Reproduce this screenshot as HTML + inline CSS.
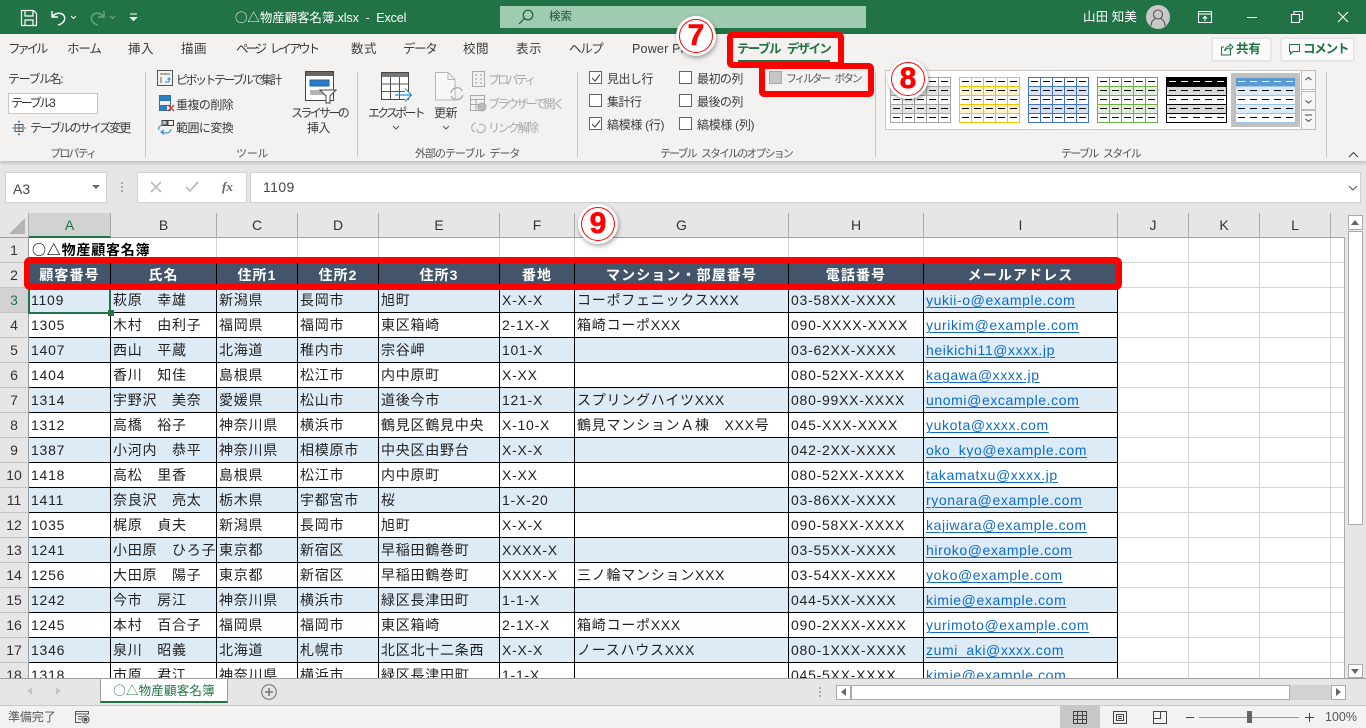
<!DOCTYPE html>
<html lang="ja"><head><meta charset="utf-8"><title>Excel</title>
<style>
*{box-sizing:border-box}
html,body{margin:0;padding:0;width:1366px;height:728px;overflow:hidden;background:#e6e6e6}
body{position:relative;font-family:"Liberation Sans","Noto Sans CJK JP",sans-serif;color:#333}
.a{position:absolute;white-space:nowrap}
.c{font-family:"Noto Sans CJK JP",sans-serif}
.r{position:absolute;font-size:12px;letter-spacing:-.55px;line-height:16px;white-space:nowrap;color:#3b3b3b}
.tab{position:absolute;top:41px;font-size:12.5px;line-height:16px;letter-spacing:.5px;color:#3c3c3c;white-space:nowrap}
.g{color:#a8a8a8}
.sep{position:absolute;top:72px;height:85px;width:1px;background:#c8c6c4}
.cb{position:absolute;width:13px;height:13px;border:1px solid #666;background:#fff}
.lbl{position:absolute;font-size:11px;letter-spacing:-.3px;color:#555;white-space:nowrap;top:146px;line-height:16px}
svg{position:absolute;overflow:visible}
table{border-collapse:separate;border-spacing:0;table-layout:fixed;position:absolute;left:0;top:0}
td,th{height:25px;padding:0 0 0 2px;font-weight:normal;font-size:14px;letter-spacing:.75px;white-space:nowrap;overflow:hidden;border-right:1px solid #000;border-bottom:1px solid #000;color:#222;line-height:24px;text-align:left}
td.h{background:#e6e6e6;border-right:1px solid #9e9e9e;border-bottom:1px solid #c4c4c4;text-align:center;padding:0;font-size:14px;letter-spacing:0;color:#333}
td.e{border-right:1px solid #d4d4d4;border-bottom:1px solid #d4d4d4;background:#fff}
tr.b td:not(.h):not(.e){background:#ddebf7}
tr.t td:not(.h):not(.e){background:#44546a;color:#fff;font-weight:bold;text-align:center;padding:0;letter-spacing:1.1px}
td u{color:#0b6cc9;text-decoration-thickness:1px;text-underline-offset:2px;letter-spacing:.6px}
.ch{position:absolute;top:213px;height:25px;background:#e6e6e6;border-right:1px solid #ababab;border-bottom:1px solid #9e9e9e;text-align:center;font-size:14px;line-height:24px;color:#333}
.btn{position:absolute;background:#fff;border:1px solid #ababab}
.red{position:absolute;border:6px solid #f00;border-radius:5px}
.num{position:absolute;width:40px;height:40px;border-radius:50%;background:#fff;box-shadow:1px 2px 5px rgba(0,0,0,.35)}
.num i{position:absolute;left:3px;top:3px;width:34px;height:34px;border-radius:50%;border:1.5px solid #f00}
.num b{position:absolute;left:0;top:0;width:40px;text-align:center;line-height:40px;font-size:30px;color:#f00;font-family:"Liberation Sans",sans-serif;font-style:normal;-webkit-text-stroke:.6px #f00}
</style></head><body>

<!-- title bar -->
<div class="a" style="left:0;top:0;width:1366px;height:34px;background:#217346"></div>
<svg style="left:20px;top:9px" width="18" height="18" fill="none" stroke="#fff" stroke-width="1.2"><path d="M1.5 1.5H13.5L16.5 4.5V16.5H1.5Z"/><path d="M5 1.5V7H13V1.5"/><path d="M5 16.5V11H13V16.5"/></svg>
<svg style="left:50px;top:9px" width="30" height="18" fill="none" stroke="#fff" stroke-width="1.4"><path d="M2 2V8H8"/><path d="M2.5 8C5 3 13 3 14.5 8 15.500 12 12 15 8 16"/><path d="M21 7l2.500 2.500L26 7" stroke-width="1"/></svg>
<svg style="left:88px;top:9px" width="30" height="18" fill="none" stroke="#6ba584" stroke-width="1.4"><path d="M16 2V8H10"/><path d="M15.500 8C13 3 5 3 3.500 8 2.500 12 6 15 10 16"/><path d="M22 7l2.500 2.500L27 7" stroke-width="1"/></svg>
<svg style="left:129px;top:13px" width="10" height="10" fill="none" stroke="#fff" stroke-width="1"><path d="M1 1H8"/><path d="M1.500 4.500L4.500 7.500 7.500 4.500Z" fill="#fff"/></svg>
<div class="a" style="left:235px;top:9px;font-size:12.5px;line-height:16px;color:#fff;letter-spacing:-.1px"><span class="c">○△</span>物産顧客名簿.xlsx&nbsp; - &nbsp;Excel</div>
<div class="a" style="left:500px;top:6px;width:366px;height:22px;background:#9fcbb1"></div>
<svg style="left:517px;top:8px" width="18" height="18" fill="none" stroke="#1d5c3a" stroke-width="1.2"><circle cx="11" cy="7" r="4.800"/><path d="M7.500 10.500L2 16"/></svg>
<div class="a" style="left:549px;top:9px;font-size:11.500px;line-height:16px;color:#22543a">検索</div>
<div class="a" style="left:1083px;top:9px;font-size:12.500px;line-height:16px;color:#fff;letter-spacing:.1px">山田 知美</div>
<svg style="left:1146px;top:5px" width="24" height="24"><circle cx="12" cy="12" r="12" fill="#c8c8c8"/><g fill="none" stroke="#555" stroke-width="1.100"><circle cx="12" cy="9.500" r="4.500"/><path d="M5 21c0-5 3-7 4.500-7.500M19 21c0-5-3-7-4.500-7.500"/></g></svg>
<svg style="left:1197px;top:9px" width="16" height="16" fill="none" stroke="#fff" stroke-width="1.100"><path d="M1.500 2.500H14.500V13.500H1.500Z"/><path d="M1.500 5H14.500"/><path d="M8 12V7.500M6 9.500L8 7.500 10 9.500"/></svg>
<div class="a" style="left:1247px;top:17px;width:10px;height:1px;background:#fff"></div>
<svg style="left:1290px;top:10px" width="14" height="14" fill="none" stroke="#fff" stroke-width="1.100"><path d="M1.500 4.500H9.500V12.500H1.500Z"/><path d="M4 4.500V1.500H12.500V9.500H9.500"/></svg>
<svg style="left:1337px;top:11px" width="12" height="12" fill="none" stroke="#fff" stroke-width="1.100"><path d="M1 1L11 11M11 1L1 11"/></svg>

<!-- tab strip + ribbon -->
<div class="a" style="left:0;top:34px;width:1366px;height:127px;background:#f3f2f1;box-shadow:0 2px 3px rgba(0,0,0,.18)"></div>
<div class="tab" style="left:8px;letter-spacing:-3.2px">ファイル</div>
<div class="tab" style="left:67px;letter-spacing:-1.1px">ホーム</div>
<div class="tab" style="left:128px">挿入</div>
<div class="tab" style="left:181px">描画</div>
<div class="tab" style="left:236px;letter-spacing:-3px;word-spacing:5px">ページ レイアウト</div>
<div class="tab" style="left:351px">数式</div>
<div class="tab" style="left:403px;letter-spacing:-1.4px">データ</div>
<div class="tab" style="left:463px">校閲</div>
<div class="tab" style="left:516px">表示</div>
<div class="tab" style="left:569px;letter-spacing:-1.4px">ヘルプ</div>
<div class="tab" style="left:632px;letter-spacing:.2px">Power Pivot</div>
<div class="tab" style="left:737px;color:#217346;font-weight:bold;letter-spacing:-1.6px;word-spacing:5px">テーブル デザイン</div>
<div class="a" style="left:738px;top:60px;width:92px;height:3px;background:#217346"></div>

<div class="btn" style="left:1212px;top:38px;width:59px;height:23px;background:#fbfbfb;border-color:#e3e3e3;box-shadow:0 0 1px #ccc"></div>
<svg style="left:1220px;top:42px" width="14" height="15" fill="none" stroke="#217346" stroke-width="1"><path d="M10.500 6.500V13H1.500V5H4"/><path d="M4.500 9C5 6 7 4 10 4V2L13 5 10 8V6C8 6 6 7 4.500 9Z"/></svg>
<div class="a" style="left:1236px;top:41px;font-size:12.500px;font-weight:bold;line-height:16px;color:#217346;letter-spacing:-.2px">共有</div>
<div class="btn" style="left:1281px;top:38px;width:73px;height:23px;background:#fbfbfb;border-color:#e3e3e3;box-shadow:0 0 1px #ccc"></div>
<svg style="left:1288px;top:43px" width="14" height="14" fill="none" stroke="#217346" stroke-width="1"><path d="M1.500 1.500H11.500V8.500H5L2.500 11V8.500H1.500Z"/></svg>
<div class="a" style="left:1303px;top:41px;font-size:12.500px;font-weight:bold;line-height:16px;color:#217346;letter-spacing:-1.2px">コメント</div>

<!-- properties -->
<div class="r" style="left:8px;top:71px;letter-spacing:-1.4px">テーブル名:</div>
<div class="a" style="left:8px;top:93px;width:90px;height:21px;background:#fff;border:1px solid #c8c6c4;font-size:12px;line-height:19px;padding-left:2px;letter-spacing:-2.3px;color:#333">テーブル3</div>
<svg style="left:11px;top:120px" width="16" height="16" fill="none" stroke="#555" stroke-width="1"><path d="M4 4.500H12V11.500H4ZM4 8H12M8 4.500V11.500"/><path d="M8 0.500V3M6.800 1.800H9.200M8 13V15.500M6.800 14.200H9.200M1 8H3M13 8H15" stroke="#2a8fd8"/></svg>
<div class="r" style="left:30px;top:120px;letter-spacing:-1.95px">テーブルのサイズ変更</div>
<div class="lbl" style="left:50px;letter-spacing:-1.8px">プロパティ</div>
<div class="sep" style="left:145px"></div>

<!-- tools -->
<svg style="left:157px;top:70px" width="17" height="17" fill="none" stroke="#555" stroke-width="1"><path d="M.5.500H15.500V15.500H.5Z"/><path d="M3 3H13V5H3ZM3 7H5V13H3Z" fill="#aaa" stroke="none"/><path d="M8 12H12V8M10.500 9.500L12 8 13.500 9.500" stroke="#2a8fd8"/></svg>
<div class="r" style="left:176px;top:72px;letter-spacing:-2.5px">ピボットテーブルで集計</div>
<svg style="left:159px;top:95px" width="17" height="17"><path d="M1 1H11V5H1Z" fill="#2a7fc8"/><path d="M1 11H8V15H1Z" fill="#2a7fc8"/><path d="M.5.500H11.500V15.500H.5ZM.5 5.500H11.500M.5 10.500H11.500" fill="none" stroke="#2a6fa8"/><path d="M9 10L15 16M15 10L9 16" stroke="#e0342c" stroke-width="1.300"/></svg>
<div class="r" style="left:176px;top:97px">重複の削除</div>
<svg style="left:157px;top:119px" width="18" height="18" fill="none" stroke="#444" stroke-width="1"><path d="M5.500 1.500H16.500V6.500H5.500ZM11 1.500V6.500M5.500 1.500V6.500"/><path d="M5 1.500H10V6H5Z" fill="#bbb"/><path d="M14 10C14 14 9 15 5 13M7 11L4 13 7 15.500M2 11C1 8 3 6 6 6.500" stroke="#2a8fd8" stroke-width="1.100"/></svg>
<div class="r" style="left:176px;top:120px">範囲に変換</div>
<svg style="left:305px;top:71px" width="30" height="32"><path d="M.5.500H28.500V29.500H.5Z" fill="#fff" stroke="#444"/><path d="M1 1H28V5H1Z" fill="#666"/><path d="M5 9H24V15H5Z" fill="#2a7fc8" stroke="#1d5fa0"/><path d="M5 19H20V24H5Z" fill="#b5b5b5"/><path d="M15 19H31L25 25V32H21V25Z" fill="#fff" stroke="#444"/></svg>
<div class="r" style="left:291px;top:105px;letter-spacing:-2.65px">スライサーの</div>
<div class="r" style="left:307px;top:120px">挿入</div>
<div class="lbl" style="left:236px">ツール</div>
<div class="sep" style="left:357px"></div>

<!-- external data -->
<svg style="left:381px;top:72px" width="32" height="32" fill="none"><path d="M.5.500H27.500V27.500H.5Z" fill="#fff" stroke="#444"/><path d="M1 1H27V5H1Z" fill="#777"/><path d="M.5 12H27.500M.5 19.500H27.500M9.500 5V27.500M18.500 5V27.500" stroke="#555"/><path d="M14 23H30M24 16.500L30.500 23 24 29.500" stroke="#2a8fd8" stroke-width="1.200" fill="#fff"/></svg>
<div class="r" style="left:368px;top:105px;letter-spacing:-2.8px">エクスポート</div>
<svg style="left:392px;top:125px" width="8" height="6" fill="none" stroke="#555"><path d="M1 1L4 4 7 1"/></svg>
<svg style="left:435px;top:72px" width="30" height="32" fill="none" stroke="#b4b4b4" stroke-width="1"><path d="M.5.500H13L20 7.500V28H.5Z" fill="#f8f8f8"/><path d="M13 .5V7.500H20"/><path d="M16 21C16 16 25 13 27 19M28 23C26 29 18 29 16 24" stroke="#aaa" stroke-width="1.300"/></svg>
<div class="r" style="left:434px;top:105px">更新</div>
<svg style="left:442px;top:125px" width="8" height="6" fill="none" stroke="#555"><path d="M1 1L4 4 7 1"/></svg>
<svg style="left:472px;top:71px" width="14" height="17" fill="none" stroke="#aaa"><path d="M.5.500H12.500V15.500H.5Z"/><path d="M3 4H5M3 8H5M3 12H5M8 4H10M8 8H10M8 12H10" stroke-width="1.200"/></svg>
<div class="r g" style="left:488px;top:72px;letter-spacing:-2.7px">プロパティ</div>
<svg style="left:470px;top:95px" width="18" height="17" fill="none" stroke="#aaa"><path d="M.5.500H14.500V15.500H.5ZM.5 4.500H14.500M.5 9.500H10M6 4.500V15.500"/><circle cx="12" cy="12" r="4" fill="#bbb"/></svg>
<div class="r g" style="left:488px;top:96px;letter-spacing:-2.6px">ブラウザーで開く</div>
<svg style="left:470px;top:119px" width="18" height="18" fill="none" stroke="#aaa" stroke-width="1.100"><path d="M6 4C1 4 0 12 5 13M9 6C14 3 17 9 14 12 11 15 7 14 7 10"/></svg>
<div class="r g" style="left:488px;top:120px;letter-spacing:-2.2px">リンク解除</div>
<div class="lbl" style="left:415px;letter-spacing:-1px;word-spacing:3px">外部のテーブル データ</div>
<div class="sep" style="left:577px"></div>

<!-- options -->
<div class="cb" style="left:589px;top:71px"></div><svg style="left:591px;top:73px" width="10" height="10" fill="none" stroke="#444" stroke-width="1.100"><path d="M1 5L4 8 9 1.500"/></svg>
<div class="r" style="left:607px;top:71px">見出し行</div>
<div class="cb" style="left:589px;top:94px"></div>
<div class="r" style="left:607px;top:94px">集計行</div>
<div class="cb" style="left:589px;top:117px"></div><svg style="left:591px;top:119px" width="10" height="10" fill="none" stroke="#444" stroke-width="1.100"><path d="M1 5L4 8 9 1.500"/></svg>
<div class="r" style="left:607px;top:117px;letter-spacing:-.3px">縞模様 (行)</div>
<div class="cb" style="left:679px;top:71px"></div>
<div class="r" style="left:697px;top:71px">最初の列</div>
<div class="cb" style="left:679px;top:94px"></div>
<div class="r" style="left:697px;top:94px">最後の列</div>
<div class="cb" style="left:679px;top:117px"></div>
<div class="r" style="left:697px;top:117px;letter-spacing:-.3px">縞模様 (列)</div>
<div class="a" style="left:769px;top:71px;width:13px;height:13px;background:#c6c6c6;border:1px solid #aaa"></div>
<div class="r" style="left:786px;top:71px;font-size:11px;color:#555;letter-spacing:-2.4px;word-spacing:5px">フィルター ボタン</div>
<div class="lbl" style="left:660px;letter-spacing:-1.9px;word-spacing:4px">テーブル スタイルのオプション</div>
<div class="sep" style="left:875px"></div>

<!-- gallery -->
<div class="a" style="left:885px;top:70px;width:431px;height:60px;background:#fff;border:1px solid #c8c8c8"></div>
<div class="a" style="left:1231px;top:73px;width:69px;height:54px;background:#c0c0c0"></div>
<svg style="left:890px;top:77px" width="62" height="47"><g fill="#e3e3e3"><rect x="0" y="9" width="61" height="9"/><rect x="0" y="27" width="61" height="9"/></g><g stroke="#a5a5a5" fill="none"><path d="M.5.500H60.500V45.500H.5ZM.5 9.500H60.500M.5 18.500H60.500M.5 27.500H60.500M.5 36.500H60.500M12.500 .5V45.500M24.500 .5V45.500M36.500 .5V45.500M48.500 .5V45.500"/></g><g stroke="#000"><path d="M3 4.500H10M15 4.500H22M27 4.500H34M39 4.500H46M51 4.500H58M3 13.500H10M15 13.500H22M27 13.500H34M39 13.500H46M51 13.500H58M3 22.500H10M15 22.500H22M27 22.500H34M39 22.500H46M51 22.500H58M3 31.500H10M15 31.500H22M27 31.500H34M39 31.500H46M51 31.500H58M3 40.500H10M15 40.500H22M27 40.500H34M39 40.500H46M51 40.500H58"/></g></svg>
<svg style="left:959px;top:77px" width="62" height="47"><g fill="#fff2cc"><rect x="0" y="9" width="61" height="9"/><rect x="0" y="27" width="61" height="9"/></g><g stroke="#ffc000" fill="none"><path d="M.5.500H60.500V45.500H.5ZM.5 9.500H60.500M.5 18.500H60.500M.5 27.500H60.500M.5 36.500H60.500M12.500 .5V45.500M24.500 .5V45.500M36.500 .5V45.500M48.500 .5V45.500"/></g><g stroke="#000"><path d="M3 4.500H10M15 4.500H22M27 4.500H34M39 4.500H46M51 4.500H58M3 13.500H10M15 13.500H22M27 13.500H34M39 13.500H46M51 13.500H58M3 22.500H10M15 22.500H22M27 22.500H34M39 22.500H46M51 22.500H58M3 31.500H10M15 31.500H22M27 31.500H34M39 31.500H46M51 31.500H58M3 40.500H10M15 40.500H22M27 40.500H34M39 40.500H46M51 40.500H58"/></g></svg>
<svg style="left:1028px;top:77px" width="62" height="47"><g fill="#d9e1f2"><rect x="0" y="9" width="61" height="9"/><rect x="0" y="27" width="61" height="9"/></g><g stroke="#4472c4" fill="none"><path d="M.5.500H60.500V45.500H.5ZM.5 9.500H60.500M.5 18.500H60.500M.5 27.500H60.500M.5 36.500H60.500M12.500 .5V45.500M24.500 .5V45.500M36.500 .5V45.500M48.500 .5V45.500"/></g><g stroke="#000"><path d="M3 4.500H10M15 4.500H22M27 4.500H34M39 4.500H46M51 4.500H58M3 13.500H10M15 13.500H22M27 13.500H34M39 13.500H46M51 13.500H58M3 22.500H10M15 22.500H22M27 22.500H34M39 22.500H46M51 22.500H58M3 31.500H10M15 31.500H22M27 31.500H34M39 31.500H46M51 31.500H58M3 40.500H10M15 40.500H22M27 40.500H34M39 40.500H46M51 40.500H58"/></g></svg>
<svg style="left:1097px;top:77px" width="62" height="47"><g fill="#e2efda"><rect x="0" y="9" width="61" height="9"/><rect x="0" y="27" width="61" height="9"/></g><g stroke="#70ad47" fill="none"><path d="M.5.500H60.500V45.500H.5ZM.5 9.500H60.500M.5 18.500H60.500M.5 27.500H60.500M.5 36.500H60.500M12.500 .5V45.500M24.500 .5V45.500M36.500 .5V45.500M48.500 .5V45.500"/></g><g stroke="#000"><path d="M3 4.500H10M15 4.500H22M27 4.500H34M39 4.500H46M51 4.500H58M3 13.500H10M15 13.500H22M27 13.500H34M39 13.500H46M51 13.500H58M3 22.500H10M15 22.500H22M27 22.500H34M39 22.500H46M51 22.500H58M3 31.500H10M15 31.500H22M27 31.500H34M39 31.500H46M51 31.500H58M3 40.500H10M15 40.500H22M27 40.500H34M39 40.500H46M51 40.500H58"/></g></svg>
<svg style="left:1166px;top:77px" width="62" height="47"><rect width="61" height="10" fill="#000"/><g fill="#d9d9d9"><rect x="0" y="9" width="61" height="9"/><rect x="0" y="27" width="61" height="9"/></g><g stroke="#000" fill="none"><path d="M.5.500H60.500V45.500H.5ZM.5 9.500H60.500M.5 18.500H60.500M.5 27.500H60.500M.5 36.500H60.500"/></g><path d="M3 4.500H10M15 4.500H22M27 4.500H34M39 4.500H46M51 4.500H58" stroke="#fff"/><path d="M3 13.500H10M15 13.500H22M27 13.500H34M39 13.500H46M51 13.500H58M3 22.500H10M15 22.500H22M27 22.500H34M39 22.500H46M51 22.500H58M3 31.500H10M15 31.500H22M27 31.500H34M39 31.500H46M51 31.500H58M3 40.500H10M15 40.500H22M27 40.500H34M39 40.500H46M51 40.500H58" stroke="#000"/></svg>
<svg style="left:1235px;top:77px" width="62" height="47"><rect width="61" height="46" fill="#fff"/><rect width="61" height="10" fill="#5b9bd5"/><g fill="#ddebf7"><rect x="0" y="9" width="61" height="9"/><rect x="0" y="27" width="61" height="9"/></g><g stroke="#9dc3e6" fill="none"><path d="M.5.500H60.500V45.500H.5ZM.5 9.500H60.500M.5 18.500H60.500M.5 27.500H60.500M.5 36.500H60.500"/></g><path d="M3 4.500H10M15 4.500H22M27 4.500H34M39 4.500H46M51 4.500H58" stroke="#fff"/><path d="M3 13.500H10M15 13.500H22M27 13.500H34M39 13.500H46M51 13.500H58M3 22.500H10M15 22.500H22M27 22.500H34M39 22.500H46M51 22.500H58M3 31.500H10M15 31.500H22M27 31.500H34M39 31.500H46M51 31.500H58M3 40.500H10M15 40.500H22M27 40.500H34M39 40.500H46M51 40.500H58" stroke="#000"/></svg>
<div class="a" style="left:1301px;top:70px;width:15px;height:20px;background:#f6f6f6;border:1px solid #bdbdbd"></div>
<div class="a" style="left:1301px;top:91px;width:15px;height:19px;background:#f6f6f6;border:1px solid #bdbdbd"></div>
<div class="a" style="left:1301px;top:110px;width:15px;height:20px;background:#f6f6f6;border:1px solid #bdbdbd"></div>
<svg style="left:1304px;top:76px" width="9" height="50" fill="none" stroke="#444"><path d="M1.500 4L4.500 1.500 7.500 4"/><path d="M1.500 24.500L4.500 27 7.500 24.500"/><path d="M1 39H8M1.500 43L4.500 45.500 7.500 43"/></svg>
<div class="lbl" style="left:1061px;letter-spacing:-1.7px;word-spacing:4px">テーブル スタイル</div>
<div class="sep" style="left:1326px"></div>
<svg style="left:1348px;top:151px" width="11" height="7" fill="none" stroke="#444" stroke-width="1.100"><path d="M1 6L5.500 1.500 10 6"/></svg>

<!-- formula bar -->
<div class="a" style="left:5px;top:172px;width:102px;height:31px;background:#fff;border:1px solid #d0d0d0;font-size:14px;line-height:32px;padding-left:7px;color:#444">A3</div>
<svg style="left:92px;top:185px" width="9" height="6"><path d="M0 0H8L4 4Z" fill="#666"/></svg>
<svg style="left:121px;top:182px" width="3" height="12" fill="#aaa"><rect y="0" width="2" height="2"/><rect y="4" width="2" height="2"/><rect y="8" width="2" height="2"/></svg>
<div class="a" style="left:137px;top:172px;width:110px;height:31px;background:#fff;border:1px solid #d0d0d0"></div>
<svg style="left:150px;top:181px" width="12" height="12" fill="none" stroke="#bbb" stroke-width="1.600"><path d="M1 1L11 11M11 1L1 11"/></svg>
<svg style="left:185px;top:181px" width="15" height="12" fill="none" stroke="#bbb" stroke-width="1.800"><path d="M1 6L5 10 13 1"/></svg>
<div class="a" style="left:222px;top:178px;font-family:'Liberation Serif',serif;font-style:italic;font-weight:bold;font-size:13px;line-height:18px;color:#666">fx</div>
<div class="a" style="left:250px;top:172px;width:1111px;height:31px;background:#fff;border:1px solid #d0d0d0;font-size:14px;line-height:29px;padding-left:12px;letter-spacing:.4px;color:#444">1109</div>
<svg style="left:1348px;top:185px" width="10" height="7" fill="none" stroke="#555"><path d="M1 1L5 5 9 1"/></svg>

<!-- column headers -->
<div class="a" style="left:0;top:213px;width:29px;height:25px;background:#e6e6e6;border-right:1px solid #ababab;border-bottom:1px solid #9e9e9e"></div>
<svg style="left:8px;top:217px" width="18" height="18"><path d="M17 1V17H1Z" fill="#b4b4b4"/></svg>
<div class="ch" style="left:29px;width:82px;background:#d2d2d2;color:#217346;border-bottom:2px solid #217346">A</div>
<div class="ch" style="left:111px;width:106px">B</div>
<div class="ch" style="left:217px;width:81px">C</div>
<div class="ch" style="left:298px;width:81px">D</div>
<div class="ch" style="left:379px;width:121px">E</div>
<div class="ch" style="left:500px;width:75px">F</div>
<div class="ch" style="left:575px;width:214px">G</div>
<div class="ch" style="left:789px;width:135px">H</div>
<div class="ch" style="left:924px;width:194px">I</div>
<div class="ch" style="left:1118px;width:71px">J</div>
<div class="ch" style="left:1189px;width:71px">K</div>
<div class="ch" style="left:1260px;width:71px">L</div>
<div class="ch" style="left:1331px;width:14px;border-right:0"></div>

<!-- grid -->
<div class="a" style="left:0;top:238px;width:1345px;height:440px;overflow:hidden;background:#fff;border-right:1px solid #ababab">
<table style="width:1345px"><colgroup><col style="width:29px"><col style="width:82px"><col style="width:106px"><col style="width:81px"><col style="width:81px"><col style="width:121px"><col style="width:75px"><col style="width:214px"><col style="width:135px"><col style="width:194px"><col style="width:71px"><col style="width:71px"><col style="width:71px"><col style="width:14px"></colgroup>
<tr><td class="h">1</td><td class="e c" colspan="2" style="font-weight:bold;color:#000;padding-left:3px;letter-spacing:.8px">○△物産顧客名簿</td><td class="e"></td><td class="e"></td><td class="e"></td><td class="e"></td><td class="e"></td><td class="e"></td><td class="e"></td><td class="e"></td><td class="e"></td><td class="e"></td><td class="e"></td></tr>
<tr class="t"><td class="h">2</td><td>顧客番号</td><td>氏名</td><td>住所1</td><td>住所2</td><td>住所3</td><td>番地</td><td>マンション・部屋番号</td><td>電話番号</td><td>メールアドレス</td><td class="e"></td><td class="e"></td><td class="e"></td><td class="e"></td></tr>
<tr class="b"><td class="h" style="background:#d2d2d2;color:#217346">3</td><td>1109</td><td>萩原　幸雄</td><td>新潟県</td><td>長岡市</td><td>旭町</td><td>X-X-X</td><td>コーポフェニックスXXX</td><td>03-58XX-XXXX</td><td><u>yukii-o@example.com</u></td><td class="e"></td><td class="e"></td><td class="e"></td><td class="e"></td></tr>
<tr><td class="h">4</td><td>1305</td><td>木村　由利子</td><td>福岡県</td><td>福岡市</td><td>東区箱崎</td><td>2-1X-X</td><td>箱崎コーポXXX</td><td>090-XXXX-XXXX</td><td><u>yurikim@example.com</u></td><td class="e"></td><td class="e"></td><td class="e"></td><td class="e"></td></tr>
<tr class="b"><td class="h">5</td><td>1407</td><td>西山　平蔵</td><td>北海道</td><td>稚内市</td><td>宗谷岬</td><td>101-X</td><td></td><td>03-62XX-XXXX</td><td><u>heikichi11@xxxx.jp</u></td><td class="e"></td><td class="e"></td><td class="e"></td><td class="e"></td></tr>
<tr><td class="h">6</td><td>1404</td><td>香川　知佳</td><td>島根県</td><td>松江市</td><td>内中原町</td><td>X-XX</td><td></td><td>080-52XX-XXXX</td><td><u>kagawa@xxxx.jp</u></td><td class="e"></td><td class="e"></td><td class="e"></td><td class="e"></td></tr>
<tr class="b"><td class="h">7</td><td>1314</td><td>宇野沢　美奈</td><td>愛媛県</td><td>松山市</td><td>道後今市</td><td>121-X</td><td>スプリングハイツXXX</td><td>080-99XX-XXXX</td><td><u>unomi@excample.com</u></td><td class="e"></td><td class="e"></td><td class="e"></td><td class="e"></td></tr>
<tr><td class="h">8</td><td>1312</td><td>高橋　裕子</td><td>神奈川県</td><td>横浜市</td><td>鶴見区鶴見中央</td><td>X-10-X</td><td>鶴見マンションＡ棟　XXX号</td><td>045-XXX-XXXX</td><td><u>yukota@xxxx.com</u></td><td class="e"></td><td class="e"></td><td class="e"></td><td class="e"></td></tr>
<tr class="b"><td class="h">9</td><td>1387</td><td>小河内　恭平</td><td>神奈川県</td><td>相模原市</td><td>中央区由野台</td><td>X-X-X</td><td></td><td>042-2XX-XXXX</td><td><u>oko_kyo@example.com</u></td><td class="e"></td><td class="e"></td><td class="e"></td><td class="e"></td></tr>
<tr><td class="h">10</td><td>1418</td><td>高松　里香</td><td>島根県</td><td>松江市</td><td>内中原町</td><td>X-XX</td><td></td><td>080-52XX-XXXX</td><td><u>takamatxu@xxxx.jp</u></td><td class="e"></td><td class="e"></td><td class="e"></td><td class="e"></td></tr>
<tr class="b"><td class="h">11</td><td>1411</td><td>奈良沢　亮太</td><td>栃木県</td><td>宇都宮市</td><td>桜</td><td>1-X-20</td><td></td><td>03-86XX-XXXX</td><td><u>ryonara@example.com</u></td><td class="e"></td><td class="e"></td><td class="e"></td><td class="e"></td></tr>
<tr><td class="h">12</td><td>1035</td><td>梶原　貞夫</td><td>新潟県</td><td>長岡市</td><td>旭町</td><td>X-X-X</td><td></td><td>090-58XX-XXXX</td><td><u>kajiwara@example.com</u></td><td class="e"></td><td class="e"></td><td class="e"></td><td class="e"></td></tr>
<tr class="b"><td class="h">13</td><td>1241</td><td>小田原　ひろ子</td><td>東京都</td><td>新宿区</td><td>早稲田鶴巻町</td><td>XXXX-X</td><td></td><td>03-55XX-XXXX</td><td><u>hiroko@example.com</u></td><td class="e"></td><td class="e"></td><td class="e"></td><td class="e"></td></tr>
<tr><td class="h">14</td><td>1256</td><td>大田原　陽子</td><td>東京都</td><td>新宿区</td><td>早稲田鶴巻町</td><td>XXXX-X</td><td>三ノ輪マンションXXX</td><td>03-54XX-XXXX</td><td><u>yoko@example.com</u></td><td class="e"></td><td class="e"></td><td class="e"></td><td class="e"></td></tr>
<tr class="b"><td class="h">15</td><td>1242</td><td>今市　房江</td><td>神奈川県</td><td>横浜市</td><td>緑区長津田町</td><td>1-1-X</td><td></td><td>044-5XX-XXXX</td><td><u>kimie@example.com</u></td><td class="e"></td><td class="e"></td><td class="e"></td><td class="e"></td></tr>
<tr><td class="h">16</td><td>1245</td><td>本村　百合子</td><td>福岡県</td><td>福岡市</td><td>東区箱崎</td><td>2-1X-X</td><td>箱崎コーポXXX</td><td>090-2XXX-XXXX</td><td><u>yurimoto@example.com</u></td><td class="e"></td><td class="e"></td><td class="e"></td><td class="e"></td></tr>
<tr class="b"><td class="h">17</td><td>1346</td><td>泉川　昭義</td><td>北海道</td><td>札幌市</td><td>北区北十二条西</td><td>X-X-X</td><td>ノースハウスXXX</td><td>080-1XXX-XXXX</td><td><u>zumi_aki@xxxx.com</u></td><td class="e"></td><td class="e"></td><td class="e"></td><td class="e"></td></tr>
<tr><td class="h">18</td><td>1318</td><td>市原　君江</td><td>神奈川県</td><td>横浜市</td><td>緑区長津田町</td><td>1-1-X</td><td></td><td>045-5XX-XXXX</td><td><u>kimie@example.com</u></td><td class="e"></td><td class="e"></td><td class="e"></td><td class="e"></td></tr>
</table></div>
<!-- selection -->
<div class="a" style="left:28px;top:287px;width:83px;height:27px;border:2px solid #217346"></div>
<div class="a" style="left:108px;top:310px;width:6px;height:6px;background:#217346"></div>

<!-- vertical scrollbar -->
<div class="a" style="left:1345px;top:213px;width:21px;height:465px;background:#e6e6e6"></div>
<div class="btn" style="left:1348px;top:215px;width:15px;height:15px"></div>
<svg style="left:1351px;top:220px" width="9" height="5"><path d="M0 5H8L4 0Z" fill="#666"/></svg>
<div class="btn" style="left:1348px;top:231px;width:15px;height:294px"></div>
<div class="btn" style="left:1348px;top:664px;width:15px;height:14px"></div>
<svg style="left:1351px;top:669px" width="9" height="5"><path d="M0 0H8L4 5Z" fill="#666"/></svg>

<!-- sheet tabs -->
<div class="a" style="left:0;top:678px;width:1366px;height:28px;background:#e6e6e6;border-top:1px solid #9e9e9e;border-bottom:1px solid #c8c8c8"></div>
<svg style="left:25px;top:687px" width="40" height="9"><path d="M7 0V8L2 4Z" fill="#c4c4c4"/><path d="M31 0V8L36 4Z" fill="#c4c4c4"/></svg>
<div class="a c" style="left:100px;top:678px;width:128px;height:25px;background:#fff;border:1px solid #9e9e9e;border-top:1px solid #9e9e9e;border-bottom:2px solid #217346;font-size:12.500px;font-weight:normal;line-height:22px;text-align:center;color:#217346;letter-spacing:.2px">○△物産顧客名簿</div>
<svg style="left:261px;top:684px" width="16" height="16" fill="none" stroke="#777" stroke-width="1.100"><circle cx="8" cy="8" r="7.300"/><path d="M8 4V12M4 8H12" stroke-width="1.600"/></svg>
<svg style="left:819px;top:687px" width="3" height="11" fill="#aaa"><rect width="2" height="2"/><rect y="4" width="2" height="2"/><rect y="8" width="2" height="2"/></svg>
<div class="a" style="left:836px;top:685px;width:495px;height:15px;background:#d2d2d2"></div>
<div class="btn" style="left:836px;top:685px;width:15px;height:15px"></div>
<svg style="left:841px;top:688px" width="5" height="9"><path d="M5 0V8L0 4Z" fill="#666"/></svg>
<div class="btn" style="left:851px;top:685px;width:439px;height:15px"></div>
<div class="btn" style="left:1331px;top:685px;width:15px;height:15px"></div>
<svg style="left:1336px;top:688px" width="5" height="9"><path d="M0 0V8L5 4Z" fill="#666"/></svg>

<!-- status bar -->
<div class="a" style="left:0;top:706px;width:1366px;height:22px;background:#f3f2f1"></div>
<div class="a" style="left:8px;top:709px;font-size:12px;line-height:16px;color:#555;letter-spacing:-.1px">準備完了</div>
<svg style="left:75px;top:710px" width="15" height="14" fill="none" stroke="#555"><path d="M.5 1.500H13.500V4H.5ZM.5 4V12.500H6"/><path d="M3 6.500H7M3 9H6"/><circle cx="10.500" cy="9.500" r="3.500"/><circle cx="10.500" cy="9.500" r="1.500" fill="#555"/></svg>
<div class="a" style="left:1060px;top:706px;width:40px;height:22px;background:#c8c7c6"></div>
<svg style="left:1073px;top:711px" width="14" height="13" fill="none" stroke="#444"><path d="M.5.500H13.500V12.500H.5ZM.5 4.500H13.500M.5 8.500H13.500M4.500.5V12.500M9.500.5V12.500"/></svg>
<svg style="left:1113px;top:711px" width="14" height="13" fill="none" stroke="#444"><path d="M.5.500H13.500V12.500H.5ZM3.500 3.500H10.500V9.500H3.500ZM5 5.500H9M5 7.500H9"/></svg>
<svg style="left:1153px;top:711px" width="14" height="13" fill="none" stroke="#444"><path d="M.5.500H13.500V12.500H.5ZM.5 7.500H7.500V.5"/></svg>
<div class="a" style="left:1186px;top:717px;width:8px;height:1px;background:#444"></div>
<div class="a" style="left:1199px;top:717px;width:100px;height:1px;background:#999"></div>
<div class="a" style="left:1247px;top:711px;width:5px;height:12px;background:#666"></div>
<svg style="left:1304px;top:712px" width="11" height="11" stroke="#444"><path d="M1 5.500H10M5.500 1V10"/></svg>
<div class="a" style="left:1325px;top:709px;font-size:12.500px;line-height:16px;color:#555">100%</div>

<!-- annotations -->
<div class="red" style="left:727px;top:32px;width:117px;height:36px"></div>
<div class="red" style="left:759px;top:63px;width:115px;height:34px;background:transparent"></div>
<div class="red" style="left:24px;top:257px;width:1098px;height:33px;border-width:6px;border-radius:6px"></div>
<div class="num" style="left:676px;top:16px"><i></i><b>7</b></div>
<div class="num" style="left:888px;top:59px"><i></i><b>8</b></div>
<div class="num" style="left:578px;top:204px"><i></i><b>9</b></div>
</body></html>
